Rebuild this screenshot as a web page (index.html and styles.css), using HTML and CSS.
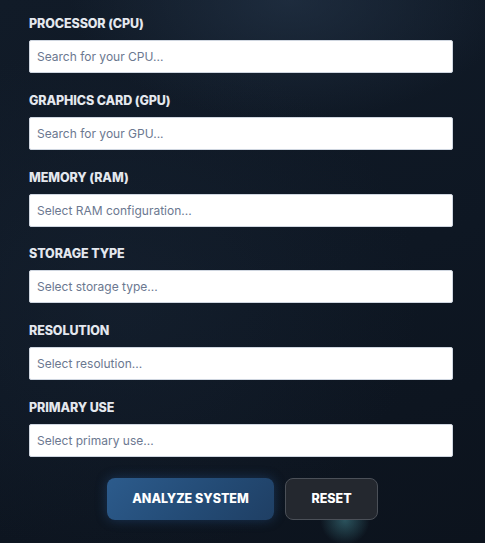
FILE: index.html
```html
<!DOCTYPE html>
<html lang="en">
<head>
    <meta charset="UTF-8">
    <meta name="viewport" content="width=device-width, initial-scale=1.0">
    <title>System Analyzer</title>
    <link rel="stylesheet" href="styles.css">
</head>
<body>
    <div class="glow"></div>
    <form class="spec-form">
        <div class="field">
            <label for="cpu">Processor (CPU)</label>
            <input type="text" id="cpu" placeholder="Search for your CPU...">
        </div>
        <div class="field">
            <label for="gpu">Graphics Card (GPU)</label>
            <input type="text" id="gpu" placeholder="Search for your GPU...">
        </div>
        <div class="field">
            <label for="ram">Memory (RAM)</label>
            <input type="text" id="ram" placeholder="Select RAM configuration...">
        </div>
        <div class="field">
            <label for="storage">Storage Type</label>
            <input type="text" id="storage" placeholder="Select storage type...">
        </div>
        <div class="field">
            <label for="resolution">Resolution</label>
            <input type="text" id="resolution" placeholder="Select resolution...">
        </div>
        <div class="field">
            <label for="use">Primary Use</label>
            <input type="text" id="use" placeholder="Select primary use...">
        </div>
        <div class="actions">
            <button type="submit" class="btn btn-primary">Analyze System</button>
            <button type="reset" class="btn btn-secondary">Reset</button>
        </div>
    </form>
</body>
</html>
```

FILE: styles.css
```css
html, body {
    height: 100%;
}
body {
    margin: 0;
    padding: 0;
    font-family: Inter, "Noto Sans", sans-serif;
    background:
        radial-gradient(ellipse 220px 120px at 290px 0px, rgba(40, 58, 80, 0.55), transparent),
        radial-gradient(ellipse 300px 260px at 120px 300px, rgba(28, 42, 60, 0.35), transparent),
        linear-gradient(160deg, #111b28 0%, #0e1723 55%, #0c131d 100%);
    overflow: hidden;
    position: relative;
}
.glow {
    position: absolute;
    left: 320px;
    top: 495px;
    width: 50px;
    height: 50px;
    border-radius: 50%;
    background: radial-gradient(circle, rgba(80, 160, 170, 0.45), transparent 70%);
    pointer-events: none;
}
.spec-form {
    position: relative;
    padding: 16px 32px 0 29px;
}
.field {
    margin-bottom: 19.8px;
}
.field label {
    display: block;
    font-size: 12.5px;
    line-height: 16px;
    font-weight: 800;
    letter-spacing: -0.1px;
    text-transform: uppercase;
    color: #e4e8ee;
    margin-bottom: 8px;
}
.field input {
    display: block;
    width: 100%;
    height: 33px;
    box-sizing: border-box;
    padding: 0 7px;
    border: 1px solid #cfd6e0;
    border-radius: 2px;
    background: #fff;
    font-family: inherit;
    font-size: 12px;
    color: #1f2937;
}
.field input::placeholder {
    color: #6b7890;
}
.actions {
    display: flex;
    justify-content: center;
    gap: 11px;
    padding-top: 1px;
    padding-left: 3px;
}
.btn {
    height: 42px;
    border-radius: 8px;
    font-family: inherit;
    font-size: 12.5px;
    font-weight: 800;
    text-transform: uppercase;
    color: #fff;
    cursor: pointer;
}
.btn-primary {
    width: 167px;
    border: none;
    background: linear-gradient(135deg, #2c5b8c 0%, #234a74 60%, #1f3f64 100%);
    box-shadow: 0 0 12px rgba(50, 110, 180, 0.35);
}
.btn-secondary {
    width: 93px;
    border: 1px solid #4b5058;
    background: #24282f;
}
```
